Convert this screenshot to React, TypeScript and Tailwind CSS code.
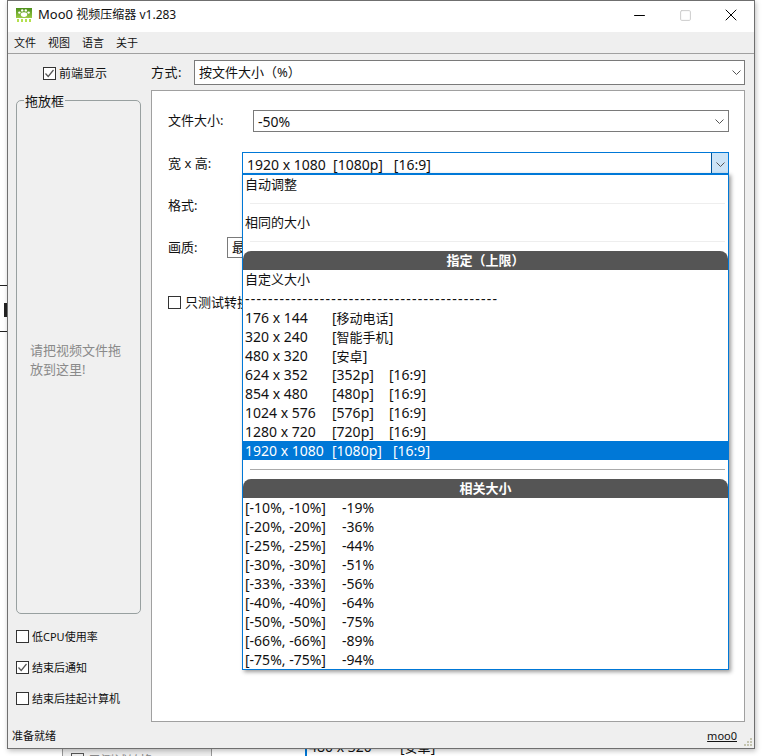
import { Minus, X, Square } from "lucide-react";

const font = { fontFamily: '"Noto Sans", "Noto Sans CJK SC", sans-serif' };

const Chevron = () => (
  <svg width="9" height="5" viewBox="0 0 9 5" fill="none" stroke="#555" strokeWidth="1">
    <path d="M0.5 0.5 L4.5 4.5 L8.5 0.5" />
  </svg>
);

const Check = ({ checked = false, label, gap = "gap-[3px]" }: { checked?: boolean; label: string; gap?: string }) => (
  <div className={`flex items-center h-[13px] ${gap}`}>
    <span className="w-[13px] h-[13px] border border-[#333] bg-white flex items-center justify-center shrink-0">
      {checked && (
        <svg width="11" height="11" viewBox="0 0 11 11" fill="none" stroke="#555" strokeWidth="1.2">
          <path d="M1.5 5.5 L4.2 8.5 L9.5 2" />
        </svg>
      )}
    </span>
    <span className="whitespace-nowrap">{label}</span>
  </div>
);

const Sep = ({ color = "bg-[#eeeeee]" }: { color?: string }) => <div className={`h-px ml-[7px] mr-[3px] ${color}`} />;

const Spacer = () => <div className="h-[9px]" />;

const Header = ({ text }: { text: string }) => (
  <div className="h-[19px] bg-[#555555] rounded-t-[8px] flex items-center justify-center text-white text-[13px] font-bold leading-none">{text}</div>
);

const Cn = ({ children }: { children: React.ReactNode }) => <span className="text-[13px]">{children}</span>;

const sizes: [string, React.ReactNode, string][] = [
  ["176 x 144", <>[<Cn>移动电话</Cn>]</>, ""],
  ["320 x 240", <>[<Cn>智能手机</Cn>]</>, ""],
  ["480 x 320", <>[<Cn>安卓</Cn>]</>, ""],
  ["624 x 352", "[352p]", "[16:9]"],
  ["854 x 480", "[480p]", "[16:9]"],
  ["1024 x 576", "[576p]", "[16:9]"],
  ["1280 x 720", "[720p]", "[16:9]"],
];

const relative = [
  ["[-10%, -10%]", "-19%"],
  ["[-20%, -20%]", "-36%"],
  ["[-25%, -25%]", "-44%"],
  ["[-30%, -30%]", "-51%"],
  ["[-33%, -33%]", "-56%"],
  ["[-40%, -40%]", "-64%"],
  ["[-50%, -50%]", "-75%"],
  ["[-66%, -66%]", "-89%"],
  ["[-75%, -75%]", "-94%"],
];

const Item = ({ children }: { children: React.ReactNode }) => (
  <div className="h-[19px] pl-[2px] flex items-center whitespace-nowrap">{children}</div>
);

const Dropdown = () => (
  <div className="absolute left-[234px] top-[172px] w-[487px] h-[497px] bg-white border border-[#0078d7] border-t-2 shadow-[2px_2px_4px_rgba(0,0,0,0.4)] text-[14px] text-[#111] leading-none">
    <Item><Cn>自动调整</Cn></Item>
    <Spacer />
    <Sep />
    <Spacer />
    <Item><Cn>相同的大小</Cn></Item>
    <Spacer />
    <Sep />
    <Spacer />
    <Header text="指定（上限）" />
    <Item><Cn>自定义大小</Cn></Item>
    <Item><span className="tracking-[1.25px]">--------------------------------------------</span></Item>
    {sizes.map((r) => (
      <Item key={r[0]}>
        <span className="w-[87px]">{r[0]}</span>
        <span className="w-[57px]">{r[1]}</span>
        <span>{r[2]}</span>
      </Item>
    ))}
    <div className="h-[19px] pl-[2px] flex items-center bg-[#0078d7] text-white whitespace-nowrap">
      <span className="w-[87px]">1920 x 1080</span>
      <span className="w-[61px]">[1080p]</span>
      <span>[16:9]</span>
    </div>
    <Spacer />
    <Sep color="bg-[#aaaaaa]" />
    <Spacer />
    <Header text="相关大小" />
    {relative.map((r) => (
      <Item key={r[0]}>
        <span className="w-[97px]">{r[0]}</span>
        <span>{r[1]}</span>
      </Item>
    ))}
  </div>
);

const Logo = () => (
  <svg width="16" height="14" viewBox="0 0 16 14">
    <defs>
      <linearGradient id="logoBg" x1="0" y1="0" x2="0" y2="1">
        <stop offset="0" stopColor="#4c8f1c" />
        <stop offset="1" stopColor="#9ccb45" />
      </linearGradient>
    </defs>
    <rect x="0" y="0" width="16" height="10" fill="url(#logoBg)" />
    <ellipse cx="8" cy="6.6" rx="3.2" ry="2.3" fill="#fff" />
    <circle cx="3.4" cy="4.6" r="1.2" fill="#fff" />
    <circle cx="6.2" cy="2.4" r="1.2" fill="#fff" />
    <circle cx="9.8" cy="2.4" r="1.2" fill="#fff" />
    <circle cx="12.6" cy="4.6" r="1.2" fill="#fff" />
    <path d="M2 11v3M6 11v3M10 11v3M14 11v3" stroke="#b4e04e" strokeWidth="2" />
  </svg>
);

const Combo = ({ className, children }: { className: string; children: React.ReactNode }) => (
  <div className={`border border-[#7a7a7a] bg-white flex items-center justify-between pl-1 ${className}`}>
    <span>{children}</span>
    <Chevron />
  </div>
);

export default function App() {
  return (
    <div className="relative w-[762px] h-[756px] bg-white overflow-hidden text-[#111]" style={font}>
      {/* bits of the window behind */}
      <div className="absolute left-0 top-[285px] w-[7px] h-[47px] border-y border-[#222]">
        <div className="absolute left-[4px] top-[17px] w-[3px] h-[14px] bg-[#222]" />
      </div>
      <div className="absolute left-[62px] top-[740px] w-[150px] h-[16px] bg-[#efefef] border-x border-[#999]">
        <span className="absolute left-[8px] top-[13px] w-[13px] h-[13px] border border-[#555]" />
        <span className="absolute left-[25px] top-[12px] text-[13px] leading-[16px] text-[#888] whitespace-nowrap">只测试转换</span>
      </div>
      <div className="absolute left-[305px] top-[740px] w-[140px] h-[16px] bg-white border-l-2 border-[#0078d7] text-[14px] leading-[13px] pl-[2px] flex whitespace-nowrap">
        <span className="w-[91px]">480 x 320</span>
        <span>[<Cn>安卓</Cn>]</span>
      </div>

      {/* main window */}
      <div className="relative ml-[7px] w-[748px] h-[749px] bg-[#efefef] border border-[#6f6f6f] shadow-[1px_2px_5px_rgba(0,0,0,0.25)] flex flex-col">
        <div className="h-[31px] pb-[3px] bg-white flex items-center shrink-0">
          <div className="ml-[8px] mr-[6px] flex"><Logo /></div>
          <span className="text-[13px]">Moo0 <span className="text-[12px]">视频压缩器 v1.283</span></span>
          <div className="ml-auto flex items-center">
            <div className="w-[46px] flex justify-center"><Minus size={17} strokeWidth={1} absoluteStrokeWidth color="#000" /></div>
            <div className="w-[46px] flex justify-center"><Square size={13} strokeWidth={1} absoluteStrokeWidth color="#ccc" /></div>
            <div className="w-[46px] flex justify-center"><X size={20} strokeWidth={1} absoluteStrokeWidth color="#000" /></div>
          </div>
        </div>
        <div className="h-[22px] pt-[2px] flex items-center gap-3 pl-[6px] text-[11px] border-b border-[#a0a0a0] shrink-0">
          <span>文件</span>
          <span>视图</span>
          <span>语言</span>
          <span>关于</span>
        </div>

        <div className="flex-1 flex min-h-0">
          {/* left column */}
          <div className="w-[143px] shrink-0 flex flex-col pl-[8px] text-[12px]">
            <div className="pt-[13px] pl-[27px] text-[12px] leading-none">
              <Check checked label="前端显示" />
            </div>
            <div className="relative mt-[20px] w-[125px] h-[514px] rounded-[5px] border border-[#98a0a0] bg-[#f0f0f0] flex items-center">
              <span className="absolute left-[7px] -top-[8px] px-[1px] bg-[#efefef] text-[13px] leading-[16px]">拖放框</span>
              <p className="pl-[13px] text-[13px] leading-[19px] text-[#8a8a8a] mt-[5px]">请把视频文件拖<br />放到这里!</p>
            </div>
            <div className="mt-[16px] flex flex-col gap-[18px] text-[11px] leading-none">
              <Check label="低CPU使用率" />
              <Check checked label="结束后通知" />
              <Check label="结束后挂起计算机" />
            </div>
          </div>

          {/* right column */}
          <div className="flex-1 min-w-0 pr-[9px] flex flex-col">
            <div className="flex items-center mt-[6px] h-[25px] shrink-0">
              <span className="w-[43px] text-[13px] tracking-[0.5px]">方式:</span>
              <Combo className="flex-1 h-[25px] pr-[3px] text-[13px]">按文件大小（%）</Combo>
            </div>
            <div className="relative mt-[5px] h-[632px] bg-white border border-[#a0a0a0] text-[13px]">
              <div className="flex items-center pl-[16px] pr-[15px] mt-[19px]">
                <span className="w-[85px]">文件大小:</span>
                <Combo className="flex-1 h-[22px] pr-[4px] text-[14px]">-50%</Combo>
              </div>
              <div className="flex items-center pl-[16px] pr-[15px] mt-[20px]">
                <span className="w-[74px]">宽 x 高:</span>
                <div className="flex-1 h-[24px] border border-[#0078d7] flex items-center justify-between pl-1 text-[14px]">
                  <span className="whitespace-pre">1920 x 1080  [1080p]   [16:9]</span>
                  <span className="w-[17px] h-full bg-[#cce4f7] border-l border-[#005499] flex items-center justify-center"><Chevron /></span>
                </div>
              </div>
              <div className="pl-[16px] mt-[19px] leading-[20px]">格式:</div>
              <div className="flex items-center pl-[16px] mt-[22px]">
                <span className="w-[59px]">画质:</span>
                <div className="w-[40px] h-[21px] border border-[#7a7a7a] pl-1 flex items-center">最</div>
              </div>
              <div className="pl-[16px] mt-[38px] leading-none">
                <Check label="只测试转换" gap="gap-[4px]" />
              </div>
            </div>
          </div>
        </div>

        {/* status bar */}
        <div className="h-[25px] pt-[1px] flex items-center justify-between pl-[4px] pr-[17px] text-[11px] shrink-0">
          <span>准备就绪</span>
          <span className="underline">moo0</span>
        </div>
        <div className="absolute right-[2px] bottom-[2px] grid grid-cols-3 gap-px">
          <span className="w-[2px] h-[2px]" /><span className="w-[2px] h-[2px]" /><span className="w-[2px] h-[2px] bg-[#c4c4b0]" />
          <span className="w-[2px] h-[2px]" /><span className="w-[2px] h-[2px] bg-[#c4c4b0]" /><span className="w-[2px] h-[2px] bg-[#c4c4b0]" />
          <span className="w-[2px] h-[2px] bg-[#c4c4b0]" /><span className="w-[2px] h-[2px] bg-[#c4c4b0]" /><span className="w-[2px] h-[2px] bg-[#c4c4b0]" />
        </div>
        <Dropdown />
      </div>
    </div>
  );
}
